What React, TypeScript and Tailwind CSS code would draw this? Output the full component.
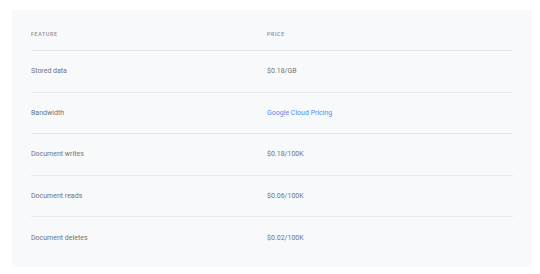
const rows: { feature: string; price: string; link?: boolean }[] = [
  { feature: "Stored data", price: "$0.18/GB" },
  { feature: "Bandwidth", price: "Google Cloud Pricing", link: true },
  { feature: "Document writes", price: "$0.18/100K" },
  { feature: "Document reads", price: "$0.06/100K" },
  { feature: "Document deletes", price: "$0.02/100K" },
];

const App = () => {
  return (
    <div className="w-[540px] h-[274px] bg-white pt-[10px] pl-[12px]" style={{ fontFamily: "Roboto, 'Noto Sans', sans-serif" }}>
      <div className="w-[520px] h-[257px] bg-[#f8f9fb] px-[19px] pt-[20px]">
        <div className="flex h-[21px] border-b border-[#e6e8eb] text-[5.3px] leading-[8px] tracking-[0.12em] font-medium text-[#8a8f96]">
          <div className="w-[236px]">FEATURE</div>
          <div>PRICE</div>
        </div>
        {rows.map((r, i) => (
          <div
            key={r.feature}
            className={`flex items-center h-[41.5px] text-[7px] text-[#6f747a] ${i < rows.length - 1 ? "border-b border-[#e6e8eb]" : ""}`}
          >
            <div className="w-[236px]">{r.feature}</div>
            <div className={r.link ? "text-[#5a8ae8]" : ""}>{r.price}</div>
          </div>
        ))}
      </div>
    </div>
  );
};

export default App;
